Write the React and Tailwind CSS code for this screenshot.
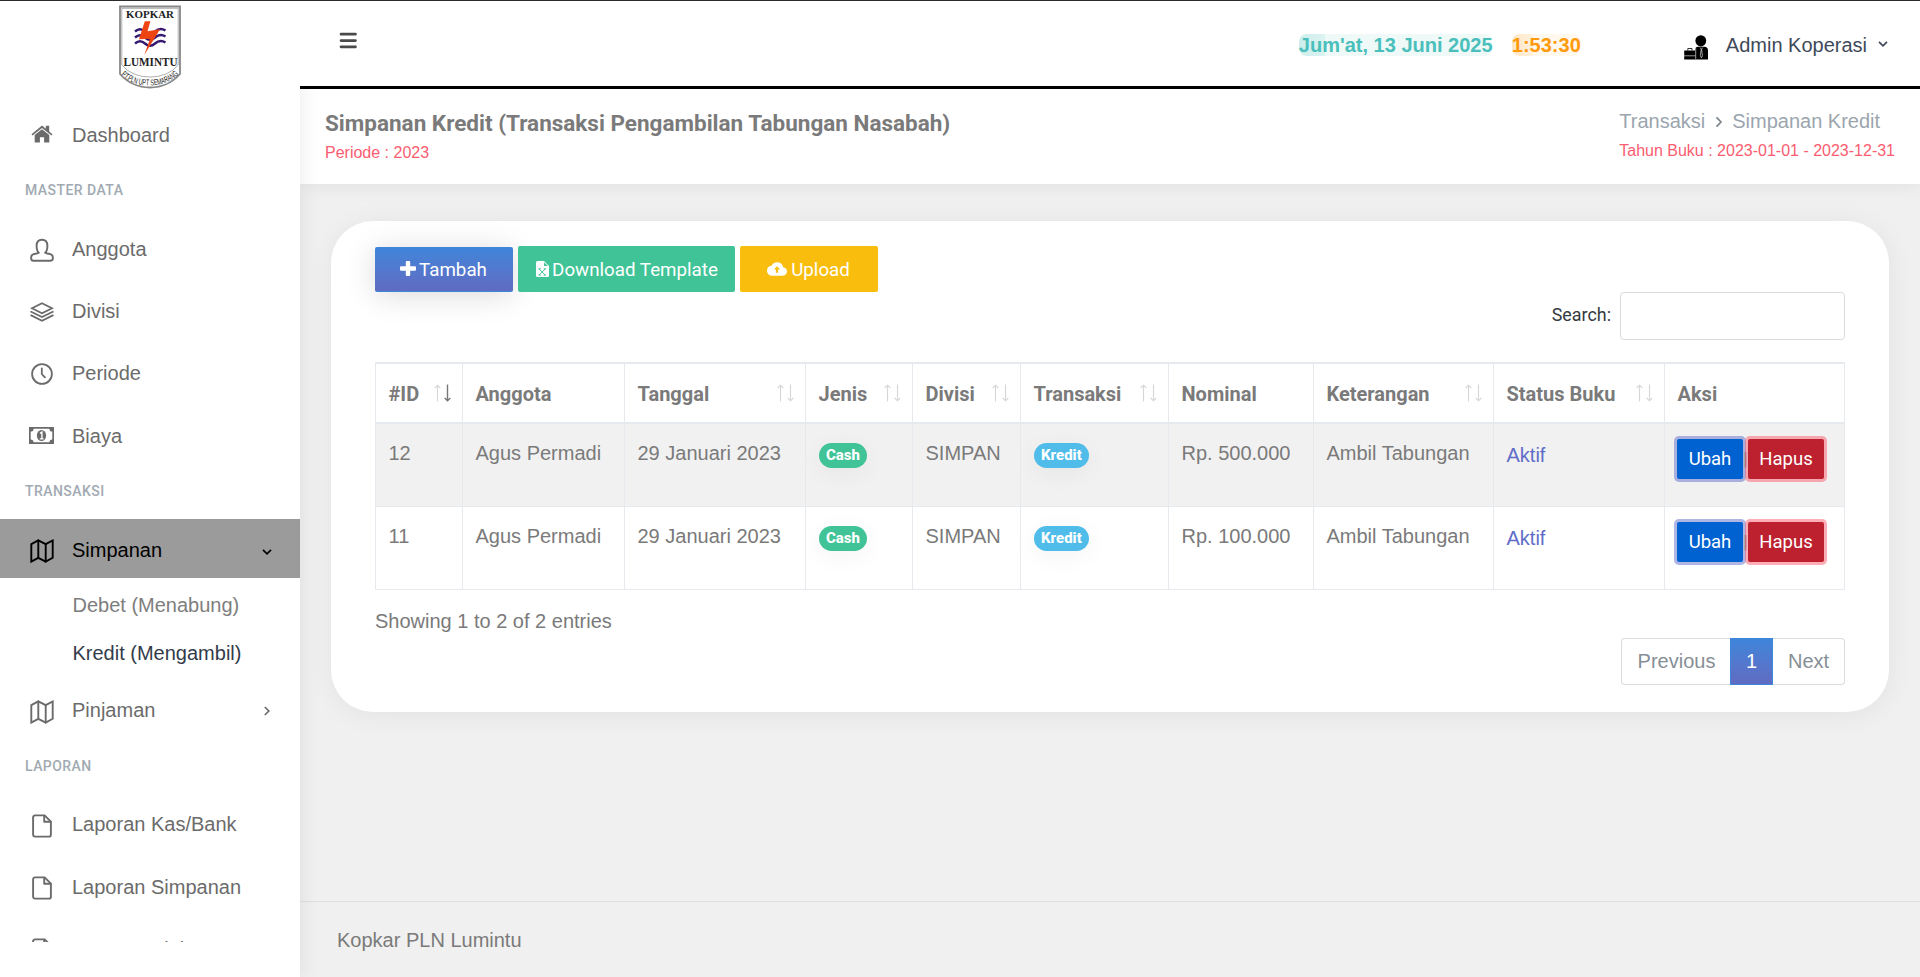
import React from "react";

const stroke = { fill: "none", stroke: "currentColor", strokeLinejoin: "round", strokeLinecap: "round" };

const icons = {
  home: (
    <svg width="22" height="18" viewBox="0 0 22 18" fill="currentColor">
      <path d="M.5 9.2 11 .6l3.8 3.1V.8h3.4v5.8l3.3 2.6-1 1.3L11 2.9 1.500 10.500z" />
      <path d="M11 4.200 18.300 10v7.500h-5.200v-5.300H8.900v5.300H3.700V10z" />
    </svg>
  ),
  user: (
    <svg width="24" height="24" viewBox="0 0 24 24" {...stroke} strokeWidth="1.900">
      <path d="M8.800 14.800C7 13.300 6.600 10.800 6.600 7.800 6.600 3.900 8.500 1.700 12 1.700s5.400 2.200 5.400 6.100c0 3-.4 5.500-2.200 7 1.300.9 3.500.9 5.200 1.300 1.700.5 2.500 1.800 2.500 3.700 0 2.200-.7 2.900-2.200 2.900H3.300c-1.500 0-2.200-.7-2.200-2.900 0-1.900.8-3.200 2.500-3.700 1.700-.4 3.900-.4 5.200-1.300z" />
    </svg>
  ),
  layers: (
    <svg width="24" height="20" viewBox="0 0 24 20" {...stroke} strokeWidth="1.800" strokeLinejoin="miter">
      <path d="M12 1.200 22 6.200 12 11.200 2 6.200z" />
      <path d="M1.200 9.800 12 15.100 22.800 9.800" />
      <path d="M1.200 13.400 12 18.700 22.800 13.400" />
    </svg>
  ),
  clock: (
    <svg width="24" height="24" viewBox="0 0 24 24" {...stroke} strokeWidth="1.800">
      <circle cx="12" cy="12" r="9.900" />
      <path d="M11.800 6.300V12l3.100 3.300" />
    </svg>
  ),
  money: (
    <svg width="25" height="17" viewBox="0 0 25 17">
      <path fill="currentColor" fillRule="evenodd" d="M0 0h25v17H0zM4.600 1.700A3 3 0 0 1 1.700 4.600v7.800a3 3 0 0 1 2.900 2.900h15.800a3 3 0 0 1 2.900-2.900V4.600a3 3 0 0 1-2.900-2.900z" />
      <ellipse cx="12.500" cy="8.500" rx="4.600" ry="5.600" fill="currentColor" />
      <path d="M11 6.300 12.900 5v6.500M10.800 11.900h3.800" fill="none" stroke="#fff" strokeWidth="1.400" />
    </svg>
  ),
  map: (
    <svg width="24" height="24" viewBox="0 0 24 24" {...stroke} strokeWidth="1.900" strokeLinejoin="miter">
      <path d="M1.300 5.200 8.300 1.400 15.700 5.200 22.700 1.500V18.800L15.700 22.600 8.300 18.800 1.300 22.600z" />
      <path d="M8.300 1.400v17.400M15.700 5.200v17.400" />
    </svg>
  ),
  file: (
    <svg width="20" height="24" viewBox="0 0 20 24" {...stroke} strokeWidth="1.900">
      <path d="M12.600 1.400H3A1.900 1.900 0 0 0 1.100 3.300v17.400A1.900 1.900 0 0 0 3 22.600h14a1.900 1.900 0 0 0 1.900-1.900V7.600z" />
      <path d="M12.200 1.600V7.800h6.500" />
    </svg>
  ),
};

function Chevron({ className }) {
  return (
    <svg className={className} width="10" height="6" viewBox="0 0 10 6" fill="none" stroke="currentColor" strokeWidth="1.700">
      <path d="M1 .8 5 4.800 9 .8" />
    </svg>
  );
}

function NavItem({ icon, label, className = "", iconClass = "" }) {
  return (
    <div className={"flex h-[62px] shrink-0 items-center " + className}>
      <span className={"ml-[21px] flex w-[41px] justify-center " + iconClass}>{icons[icon]}</span>
      <span className="ml-[10px] leading-6">{label}</span>
    </div>
  );
}

function Caption({ children, className = "" }) {
  return (
    <div className={"pl-[25px] font-['Roboto',sans-serif] text-[14px] font-medium leading-5 tracking-[0.45px] text-[#a1aab2] " + className}>
      {children}
    </div>
  );
}

function Logo() {
  return (
    <svg width="64" height="84" viewBox="0 0 64 84">
      <path d="M2 1.500H62V69Q50 82.500 32 82.500T2 69z" fill="#fff" stroke="#888" strokeWidth="1.800" />
      <path d="M3.800 3.300H60.200V60Q50 72 32 72T3.800 60z" fill="none" stroke="#777" strokeWidth=".6" />
      <text x="32" y="12.800" textAnchor="middle" fontFamily="Liberation Serif, serif" fontWeight="700" fontSize="10.500" textLength="48" lengthAdjust="spacingAndGlyphs" fill="#222">KOPKAR</text>
      <g fill="none" stroke="#35186f" strokeWidth="2.400">
        <path d="M17 26.500q5-4.500 10 0t10 0t10.500-1" />
        <path d="M17 32.500q5-4.500 10 0t10 0t10.500-1" />
        <path d="M17 38.500q5-4.500 10 0t10 0t10.500-1" />
      </g>
      <path d="M26.800 16.300h5.600L29.500 26.300 42 24.300 26.300 50 32 33.800 21 34.200z" fill="#ee4411" />
      <text x="32.500" y="60.800" textAnchor="middle" fontFamily="Liberation Serif, serif" fontWeight="700" fontSize="12" textLength="54" lengthAdjust="spacingAndGlyphs" fill="#222">LUMINTU</text>
      <path id="ribbon" d="M3 70Q14 80.500 32 80.500T62 68" fill="none" />
      <text fontFamily="Liberation Sans, sans-serif" fontSize="8.500" fill="#222">
        <textPath href="#ribbon" textLength="63" lengthAdjust="spacingAndGlyphs">PT.PLN UPT SEMARANG</textPath>
      </text>
    </svg>
  );
}

function Sidebar() {
  return (
    <aside className="relative z-10 flex w-[300px] shrink-0 flex-col bg-white text-[20px] text-[#6b6b6b] shadow-[1px_0_20px_rgba(0,0,0,0.08)]">
      <div className="flex h-[88px] shrink-0 justify-center pt-1">
        <Logo />
      </div>
      <nav className="flex h-[853px] flex-col overflow-hidden pt-[15px]">
        <NavItem icon="home" label="Dashboard" iconClass="-mt-[2px]" />
        <Caption className="mt-[14px]">MASTER DATA</Caption>
        <NavItem icon="user" label="Anggota" className="mt-[18px]" iconClass="pt-px" />
        <NavItem icon="layers" label="Divisi" iconClass="pt-px" />
        <NavItem icon="clock" label="Periode" iconClass="pt-[2px]" />
        <NavItem icon="money" label="Biaya" className="mt-px" iconClass="-mt-[2px]" />
        <Caption className="mt-[14px]">TRANSAKSI</Caption>
        <div className="mt-[18px] flex h-[59px] shrink-0 items-center bg-[#9b9b9b] text-black">
          <span className="ml-[21px] flex w-[41px] justify-center pt-[5px]">{icons.map}</span>
          <span className="ml-[10px] flex-1 leading-6 pt-0.5">Simpanan</span>
          <Chevron className="mr-[28px] mt-[7px]" />
        </div>
        <div className="mt-[15px] pl-[72.500px] leading-6 text-[#7e7e7e]">Debet (Menabung)</div>
        <div className="mt-[24px] pl-[72.500px] leading-6 text-[#333b4b]">Kredit (Mengambil)</div>
        <div className="mt-[15px] flex h-[59px] shrink-0 items-center">
          <span className="ml-[21px] flex w-[41px] justify-center pt-[5px]">{icons.map}</span>
          <span className="ml-[10px] flex-1 leading-6">Pinjaman</span>
          <Chevron className="mr-[28px] mt-[3px] -rotate-90" />
        </div>
        <Caption className="mt-[17px]">LAPORAN</Caption>
        <NavItem icon="file" label="Laporan Kas/Bank" className="mt-[17px]" iconClass="pt-[4px]" />
        <NavItem icon="file" label="Laporan Simpanan" className="mt-px" iconClass="pt-[2px]" />
        <NavItem icon="file" label="Laporan Pinjaman" iconClass="pt-[2px]" />
      </nav>
    </aside>
  );
}

function Header() {
  return (
    <header className="relative z-20 flex h-[88px] items-center border-b-[3px] border-black bg-white pr-[32px]">
      <svg className="ml-[38.500px] -mt-[5px]" width="18" height="18" viewBox="0 0 18 18" stroke="#4a4a4a" strokeWidth="2.700" strokeLinecap="round">
        <path d="M2 2.200h14.500M2 8.600h14.500M2 14.800h14.500" />
      </svg>
      <div className="ml-auto mt-[2px] flex items-center text-[20px] font-bold leading-[22px]">
        <span className="w-[193px] whitespace-nowrap rounded-[8px] bg-[linear-gradient(90deg,#cdeeec_0,#dcf3f1_26px,#eef9f8_26px)] text-[#4bbfbb]">Jum'at, 13 Juni 2025</span>
        <span className="ml-[20px] w-[69px] whitespace-nowrap rounded-[8px] bg-[linear-gradient(90deg,#ffe6c4_0,#fff1de_21px,#fff8ee_21px)] text-[#ff9a0c]">1:53:30</span>
      </div>
      <svg className="ml-[103px] mt-[8px]" width="25" height="25" viewBox="0 0 25 25">
        <ellipse cx="16.800" cy="5.800" rx="5.400" ry="5.600" />
        <path d="M11 24.500V15q0-3 3-3.300h6.500q3.300.3 3.500 3.500v9.300z" />
        <path d="M.2 15.500h11.300v9H.2z" />
        <path d="M3.800 15.500v-2h4.200v2" fill="none" stroke="#000" strokeWidth=".8" />
        <path d="M0 20.800h11.500M11.700 13v11.500" stroke="#fff" strokeWidth=".6" />
        <path d="m16.200 12.600 1 1.600-.8 6.400 1 2.200 1-2.200-.8-6.400 1-1.600" fill="none" stroke="#fff" strokeWidth=".6" />
      </svg>
      <span className="ml-[17px] mt-[2px] text-[20px] leading-6 text-[#3e4a59]">Admin Koperasi</span>
      <Chevron className="ml-[11px] mt-px text-[#3e4a59]" />
    </header>
  );
}

function SortArrows({ active }) {
  return (
    <svg className="mr-[2px] mt-[-1px]" width="18" height="18" viewBox="0 0 18 18" fill="none" strokeWidth="1.100">
      <path stroke="#d6d6d6" d="M4.500 17.500V1.500M1.700 4 4.500 1.200 7.300 4" />
      <path stroke={active ? "#777" : "#d6d6d6"} strokeWidth={active ? 1.400 : 1.100} d="M14.500 .5V16.500M11.700 14 14.500 16.800 17.300 14" />
    </svg>
  );
}

const columns = [
  { name: "#ID", sort: "active" },
  { name: "Anggota" },
  { name: "Tanggal", sort: "idle" },
  { name: "Jenis", sort: "idle" },
  { name: "Divisi", sort: "idle" },
  { name: "Transaksi", sort: "idle" },
  { name: "Nominal" },
  { name: "Keterangan", sort: "idle" },
  { name: "Status Buku", sort: "idle" },
  { name: "Aksi" },
];

const rows = [
  { id: "12", nominal: "Rp. 500.000", shade: "bg-[#f1f1f1]" },
  { id: "11", nominal: "Rp. 100.000", shade: "bg-white" },
];

const cell = "overflow-visible whitespace-nowrap border-b border-r border-[#e6eaee] px-[12.500px] pt-[16.500px] align-top first:border-l";
const badge = "flex h-[25px] w-fit items-center rounded-full px-[7.500px] pb-px font-['Roboto',sans-serif] text-[15px] font-extrabold text-white shadow-[0_5px_25px_rgba(0,0,0,0.05)] mt-[2px]";

function DataTable() {
  return (
    <table className="mt-[22px] w-[1470px] table-fixed border-separate border-spacing-0 text-[20px] leading-6 text-[#7a7a7a]">
      <colgroup>
        <col className="w-[88px]" />
        <col className="w-[162px]" />
        <col className="w-[181px]" />
        <col className="w-[107px]" />
        <col className="w-[108px]" />
        <col className="w-[148px]" />
        <col className="w-[145px]" />
        <col className="w-[180px]" />
        <col className="w-[171px]" />
        <col className="w-[180px]" />
      </colgroup>
      <thead>
        <tr className="h-[62px]">
          {columns.map((c) => (
            <th key={c.name} className="border-y-2 border-r border-[#e6eaee] px-[12.500px] py-0 text-left align-middle first:border-l">
              <div className="-mr-[3px] flex items-center justify-between whitespace-nowrap font-['Roboto',sans-serif] text-[20px] font-bold">
                <span className="pt-[2px]">{c.name}</span>
                {c.sort && <SortArrows active={c.sort === "active"} />}
              </div>
            </th>
          ))}
        </tr>
      </thead>
      <tbody>
        {rows.map((r) => (
          <tr key={r.id} className={"h-[83px] " + r.shade}>
            <td className={cell}>{r.id}</td>
            <td className={cell}>Agus Permadi</td>
            <td className={cell}>29 Januari 2023</td>
            <td className={cell}><span className={badge + " bg-[#40c397]"}>Cash</span></td>
            <td className={cell}>SIMPAN</td>
            <td className={cell}><span className={badge + " bg-[#4fbcea]"}>Kredit</span></td>
            <td className={cell}>{r.nominal}</td>
            <td className={cell}>Ambil Tabungan</td>
            <td className={cell}><div className="pt-[2px] text-[#5f6dc8]">Aktif</div></td>
            <td className={cell}>
              <div className="-mt-[1.500px] -ml-[0.500px] flex items-center font-['Roboto',sans-serif] text-[18.500px] text-white">
                <button className="h-[40px] w-[66px] rounded-[2px] bg-[#0062d1] shadow-[0_0_0_3px_rgba(95,109,200,0.5)]">Ubah</button>
                <span className="w-[5px] text-center text-[#7a7a7a]">|</span>
                <button className="relative h-[40px] w-[76px] rounded-[2px] bg-[#bd2130] shadow-[0_0_0_3px_rgba(250,92,110,0.5)]">Hapus</button>
              </div>
            </td>
          </tr>
        ))}
      </tbody>
    </table>
  );
}

function Card() {
  return (
    <section className="mx-[31px] mt-[37px] h-[491px] rounded-[42px] bg-white px-[44px] pt-[25px] shadow-[1px_3px_28px_rgba(0,0,0,0.06)]">
      <div className="flex h-[46px] items-end gap-[5px] font-['Roboto',sans-serif] text-[18.750px] text-white">
        <button className="flex h-[45px] w-[138px] items-center justify-center gap-[3px] rounded-[2px] border-b border-[#3d86da] bg-linear-to-b from-[#3d86da] to-[#5f6bc2] pr-px pt-[2px] shadow-[0_3px_30px_rgba(0,0,0,0.15)]">
          <svg className="-mt-[3px]" width="16" height="15" viewBox="0 0 16 15" fill="#fff"><path d="M5.800 1q0-1 1-1h2.400q1 0 1 1v4.300H15q1 0 1 1v2.400q0 1-1 1h-4.800V14q0 1-1 1H6.800q-1 0-1-1V9.700H1q-1 0-1-1V6.300q0-1 1-1h4.800z" /></svg>
          Tambah
        </button>
        <button className="relative flex h-[46px] w-[217px] items-center justify-center gap-[3px] rounded-[2px] bg-[#40c397] pl-px pt-[2px]">
          <svg className="-mt-[2px]" width="13" height="16" viewBox="0 0 13 16"><path d="M1.500 0H8l5 5v9.500q0 1.500-1.500 1.500h-10Q0 16 0 14.500v-13Q0 0 1.500 0z" fill="#fff" /><path d="M8 1.200V5h3.800z" fill="#40c397" /><path d="m3.200 8 6 6M9.200 8l-6 6M2.500 7.800h2.400M7.700 7.800h2.400M2.500 14.100h2.400M7.700 14.100h2.400" fill="none" stroke="#40c397" strokeWidth="1" /></svg>
          Download Template
        </button>
        <button className="flex h-[46px] w-[138px] items-center justify-center gap-[4px] rounded-[2px] bg-[#f9bd0e] pr-px pt-[2px]">
          <svg className="-mt-[2px]" width="20" height="14" viewBox="0 4 24 16"><path fillRule="evenodd" fill="#fff" d="M19.350 10.040A7.490 7.490 0 0 0 12 4C9.110 4 6.600 5.640 5.350 8.040A5.994 5.994 0 0 0 0 14c0 3.310 2.690 6 6 6h13c2.760 0 5-2.240 5-5 0-2.640-2.050-4.780-4.650-4.960zM12 8.600l3.500 4h-2.200v4h-2.600v-4H8.500z" /></svg>
          Upload
        </button>
      </div>
      <div className="flex items-center justify-end gap-[9px] font-['Roboto',sans-serif] text-[17.900px] text-[#343a40]">
        <span className="-mt-px">Search:</span>
        <span className="h-[48px] w-[225px] rounded-[4px] border border-[#d9dbdd] bg-white" />
      </div>
      <DataTable />
      <div className="mt-[19px] text-[20px] leading-6 text-[#7a7a7a]">Showing 1 to 2 of 2 entries</div>
      <div className="mt-[5px] flex justify-end text-[20px] text-[#868e96]">
        <span className="flex h-[47px] w-[109px] items-center justify-center rounded-l-[4px] border border-r-0 border-[#dadcdf] pb-[2px] pl-px">Previous</span>
        <span className="flex h-[47px] w-[43px] items-center justify-center border border-[#3d86da] bg-linear-to-b from-[#3d86da] to-[#5f6bc2] pb-[2px] text-white">1</span>
        <span className="flex h-[47px] w-[72px] items-center justify-center rounded-r-[4px] border border-l-0 border-[#dadcdf] pb-[2px]">Next</span>
      </div>
    </section>
  );
}

export default function App() {
  return (
    <div className="flex h-[977px] w-[1920px] overflow-hidden border-t border-[#2b2b2b] bg-[#f0f0f0] font-['Liberation_Sans',Arial,sans-serif]">
      <Sidebar />
      <div className="flex w-[1620px] flex-col">
        <div className="relative z-20"><Header /></div>
        <div className="flex h-[95px] shrink-0 justify-between bg-white pl-[25px] pr-[25px] shadow-[1px_0_20px_rgba(0,0,0,0.08)]">
          <div className="pt-[20px]">
            <h1 className="font-['Roboto',sans-serif] text-[22.500px] font-bold leading-7 text-[#7a7a7a]">Simpanan Kredit (Transaksi Pengambilan Tabungan Nasabah)</h1>
            <div className="mt-[6px] text-[16px] leading-5 text-[#fa5c70]">Periode : 2023</div>
          </div>
          <div className="pt-[20px]">
            <div className="flex items-center text-[20px] leading-6 text-[#9ba5ae]">
              Transaksi
              <svg className="ml-[10px] mr-[9px] mt-[2px]" width="8" height="12" viewBox="0 0 8 12" fill="none" stroke="#7d858c" strokeWidth="1.700"><path d="m1.500 1.300 4.500 4.700-4.500 4.700" /></svg>
              Simpanan Kredit
            </div>
            <div className="mt-[8px] text-[16px] leading-5 text-[#fa5c70]">Tahun Buku : 2023-01-01 - 2023-12-31</div>
          </div>
        </div>
        <Card />
        <footer className="mt-auto h-[76px] shrink-0 border-t border-[#dfe0e1] pl-[37px] pt-[26px] text-[20px] leading-6 text-[#7a7a7a]">Kopkar PLN Lumintu</footer>
      </div>
    </div>
  );
}
